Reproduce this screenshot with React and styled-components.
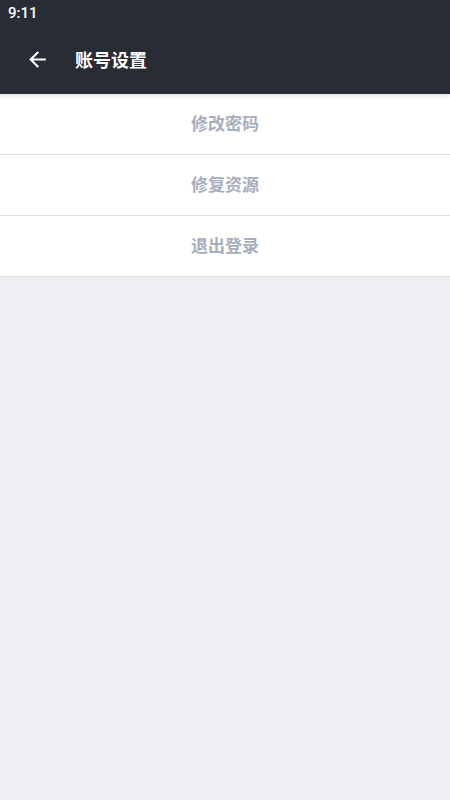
import React from 'react'
import styled, { createGlobalStyle } from 'styled-components';

const GlobalStyle = createGlobalStyle`
  html, body {
    margin: 0;
    padding: 0;
    background: #efeef3;
  }
  body {
    font-family: Roboto, "Noto Sans CJK SC", sans-serif;
  }
`;

const items = ['修改密码', '修复资源', '退出登录']

function App() {
  return (
    <Page>
      <GlobalStyle />
      <Header>
        <StatusBar>9:11</StatusBar>
        <TitleBar>
          <BackButton aria-label="back">
            <svg width="25" height="25" viewBox="0 0 24 24" fill="#fff">
              <path d="M20 11H7.83l5.59-5.59L12 4l-8 8 8 8 1.41-1.41L7.83 13H20v-2z" />
            </svg>
          </BackButton>
          <Title>账号设置</Title>
        </TitleBar>
      </Header>
      <List>
        {items.map((label) => (
          <Row key={label}>{label}</Row>
        ))}
      </List>
    </Page>
  )
}

const Page = styled.div`
  width: 450px;
  min-height: 800px;
  background: #efeef3;
`;

const Header = styled.div`
  background: #282c35;
  height: 94px;
  display: flex;
  flex-direction: column;
  position: relative;
  z-index: 1;
  box-shadow: 0 2px 4px rgba(0, 0, 0, 0.12);
`;

const StatusBar = styled.div`
  height: 25px;
  padding-left: 8px;
  color: #fff;
  font-family: Roboto, sans-serif;
  font-size: 15px;
  font-weight: 500;
  line-height: 26px;
`;

const TitleBar = styled.div`
  flex: 1;
  display: flex;
  align-items: center;
  padding-left: 25px;
  padding-bottom: 1px;
`;

const BackButton = styled.div`
  width: 25px;
  height: 25px;
  display: flex;
  align-items: center;
  justify-content: center;
  margin-right: 25px;
`;

const Title = styled.div`
  color: #fff;
  font-family: "Noto Sans CJK SC", sans-serif;
  font-size: 18px;
  font-weight: 700;
`;

const List = styled.div`
  background: #fff;
`;

const Row = styled.div`
  height: 61px;
  padding-bottom: 4px;
  box-sizing: border-box;
  border-bottom: 1px solid #dcdce0;
  display: flex;
  align-items: center;
  justify-content: center;
  color: #a8aebb;
  font-family: "Noto Sans CJK SC", sans-serif;
  font-size: 17px;
  font-weight: 700;
`;

export default App
